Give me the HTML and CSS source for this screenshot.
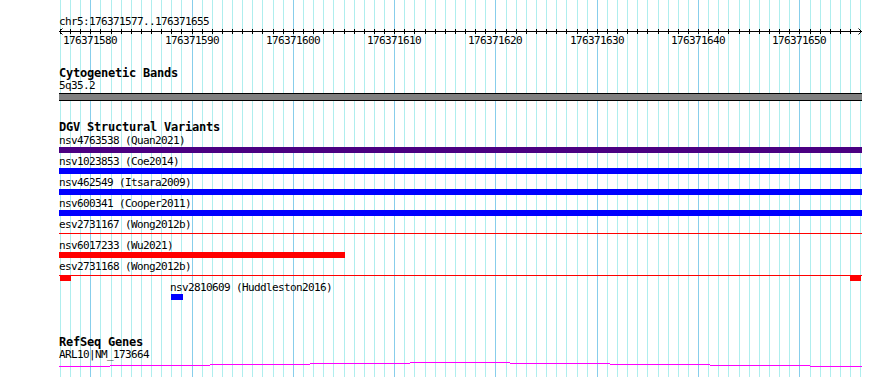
FILE: index.html
```html
<!DOCTYPE html>
<html lang="en">
<head>
<meta charset="utf-8">
<title>chr5:176371577..176371655</title>
<link rel="stylesheet" href="styles.css">
</head>
<body>
<div class="browser">
  <svg class="grid" width="890" height="377" viewBox="0 0 890 377" aria-hidden="true">
    <path class="grid-minor" d="M60.5 0V377M70.5 0V377M80.5 0V377M100.5 0V377M111.5 0V377M121.5 0V377M131.5 0V377M141.5 0V377M151.5 0V377M161.5 0V377M171.5 0V377M181.5 0V377M202.5 0V377M212.5 0V377M222.5 0V377M232.5 0V377M242.5 0V377M252.5 0V377M262.5 0V377M273.5 0V377M283.5 0V377M303.5 0V377M313.5 0V377M323.5 0V377M333.5 0V377M344.5 0V377M354.5 0V377M364.5 0V377M374.5 0V377M384.5 0V377M404.5 0V377M414.5 0V377M425.5 0V377M435.5 0V377M445.5 0V377M455.5 0V377M465.5 0V377M475.5 0V377M485.5 0V377M506.5 0V377M516.5 0V377M526.5 0V377M536.5 0V377M546.5 0V377M556.5 0V377M566.5 0V377M577.5 0V377M587.5 0V377M607.5 0V377M617.5 0V377M627.5 0V377M637.5 0V377M647.5 0V377M658.5 0V377M668.5 0V377M678.5 0V377M688.5 0V377M708.5 0V377M718.5 0V377M728.5 0V377M739.5 0V377M749.5 0V377M759.5 0V377M769.5 0V377M779.5 0V377M789.5 0V377M810.5 0V377M820.5 0V377M830.5 0V377M840.5 0V377M850.5 0V377M860.5 0V377"/>
    <path class="grid-major" d="M90.5 0V377M192.5 0V377M293.5 0V377M394.5 0V377M495.5 0V377M597.5 0V377M698.5 0V377M799.5 0V377"/>
  </svg>

  <section class="ruler">
    <div class="label ruler-title">chr5:176371577..176371655</div>
    <svg class="ruler-axis" width="890" height="7" viewBox="0 0 890 7" aria-hidden="true">
      <path class="axis-line" d="M59 3.5H862"/>
      <path class="axis-ticks" d="M60.5 1V6M70.5 1V6M80.5 1V6M90.5 1V6M100.5 1V6M111.5 1V6M121.5 1V6M131.5 1V6M141.5 1V6M151.5 1V6M161.5 1V6M171.5 1V6M181.5 1V6M192.5 1V6M202.5 1V6M212.5 1V6M222.5 1V6M232.5 1V6M242.5 1V6M252.5 1V6M262.5 1V6M273.5 1V6M283.5 1V6M293.5 1V6M303.5 1V6M313.5 1V6M323.5 1V6M333.5 1V6M344.5 1V6M354.5 1V6M364.5 1V6M374.5 1V6M384.5 1V6M394.5 1V6M404.5 1V6M414.5 1V6M425.5 1V6M435.5 1V6M445.5 1V6M455.5 1V6M465.5 1V6M475.5 1V6M485.5 1V6M495.5 1V6M506.5 1V6M516.5 1V6M526.5 1V6M536.5 1V6M546.5 1V6M556.5 1V6M566.5 1V6M577.5 1V6M587.5 1V6M597.5 1V6M607.5 1V6M617.5 1V6M627.5 1V6M637.5 1V6M647.5 1V6M658.5 1V6M668.5 1V6M678.5 1V6M688.5 1V6M698.5 1V6M708.5 1V6M718.5 1V6M728.5 1V6M739.5 1V6M749.5 1V6M759.5 1V6M769.5 1V6M779.5 1V6M789.5 1V6M799.5 1V6M810.5 1V6M820.5 1V6M830.5 1V6M840.5 1V6M850.5 1V6"/>
      <path class="axis-arrow" d="M62.5 0.5L59.5 3.5L62.5 6.5M858.5 0.5L861.5 3.5L858.5 6.5"/>
    </svg>
    <div class="ruler-labels">
      <span class="label tick-label" style="left:90px">176371580</span>
      <span class="label tick-label" style="left:192px">176371590</span>
      <span class="label tick-label" style="left:293px">176371600</span>
      <span class="label tick-label" style="left:394px">176371610</span>
      <span class="label tick-label" style="left:495px">176371620</span>
      <span class="label tick-label" style="left:597px">176371630</span>
      <span class="label tick-label" style="left:698px">176371640</span>
      <span class="label tick-label" style="left:799px">176371650</span>
    </div>
  </section>

  <section class="track track-cyto">
    <h2 class="track-title track-title-short">Cytogenetic Bands</h2>
    <div class="label">5q35.2</div>
    <div class="band"></div>
  </section>

  <section class="track track-dgv">
    <h2 class="track-title">DGV Structural Variants</h2>

    <div class="sv">
      <div class="label">nsv4763538 (Quan2021)</div>
      <div class="sv-glyph"><div class="bar bar-purple" style="width:803px"></div></div>
    </div>
    <div class="sv">
      <div class="label">nsv1023853 (Coe2014)</div>
      <div class="sv-glyph"><div class="bar bar-blue" style="width:803px"></div></div>
    </div>
    <div class="sv">
      <div class="label">nsv462549 (Itsara2009)</div>
      <div class="sv-glyph"><div class="bar bar-blue" style="width:803px"></div></div>
    </div>
    <div class="sv">
      <div class="label">nsv600341 (Cooper2011)</div>
      <div class="sv-glyph"><div class="bar bar-blue" style="width:803px"></div></div>
    </div>
    <div class="sv">
      <div class="label">esv2731167 (Wong2012b)</div>
      <div class="sv-glyph"><div class="sv-line" style="width:803px"></div></div>
    </div>
    <div class="sv">
      <div class="label">nsv6017233 (Wu2021)</div>
      <div class="sv-glyph"><div class="bar bar-red" style="width:286px"></div></div>
    </div>
    <div class="sv">
      <div class="label">esv2731168 (Wong2012b)</div>
      <div class="sv-glyph">
        <div class="sv-line" style="width:803px"></div>
        <div class="sv-block" style="left:1px"></div>
        <div class="sv-block" style="left:791px"></div>
      </div>
    </div>
    <div class="sv">
      <div class="label" style="margin-left:111px">nsv2810609 (Huddleston2016)</div>
      <div class="sv-glyph"><div class="bar bar-blue" style="width:12px;margin-left:112px"></div></div>
    </div>
  </section>

  <section class="track track-refseq">
    <h2 class="track-title track-title-tight">RefSeq Genes</h2>
    <div class="label">ARL10|NM_173664</div>
    <svg class="gene" width="803" height="6" viewBox="0 0 803 6" aria-hidden="true">
      <path d="M0 5.5H51M51 4.5H151M151 3.5H251M251 2.5H351M351 1.5H451M451 2.5H551M551 3.5H651M651 4.5H751M751 5.5H803"/>
    </svg>
  </section>
</div>
</body>
</html>
```

FILE: styles.css
```css
* {
  box-sizing: border-box;
  margin: 0;
  padding: 0;
}

html,
body {
  background: #ffffff;
}

body {
  width: 890px;
  height: 377px;
  overflow: hidden;
  font-family: "DejaVu Sans Mono", "Liberation Mono", monospace;
  color: #000000;
}

.browser {
  position: relative;
  width: 890px;
  height: 377px;
}

.grid {
  position: absolute;
  top: 0;
  left: 0;
  z-index: 0;
  shape-rendering: crispEdges;
}

.grid-minor {
  stroke: #afeeee;
  stroke-width: 1;
  fill: none;
}

.grid-major {
  stroke: #87ceeb;
  stroke-width: 1;
  fill: none;
}

.ruler,
.track {
  position: relative;
  z-index: 1;
}

.label {
  font-size: 11px;
  line-height: 13px;
  letter-spacing: -0.62px;
  white-space: nowrap;
}

.track-title {
  font-size: 12px;
  font-weight: bold;
  line-height: 13px;
  letter-spacing: -0.22px;
  white-space: nowrap;
}

.track-title-short {
  line-height: 12px;
}

.track-title-tight {
  line-height: 11px;
}

/* ruler */
.ruler-title {
  padding-top: 15px;
  padding-left: 59px;
}

.ruler-axis {
  display: block;
  shape-rendering: crispEdges;
}

.axis-line,
.axis-ticks,
.axis-arrow {
  stroke: #000000;
  stroke-width: 1;
  fill: none;
}

.axis-arrow {
  shape-rendering: auto;
}

.ruler-labels {
  position: relative;
  height: 13px;
  margin-top: -1px;
}

.tick-label {
  position: absolute;
  top: 0;
  transform: translateX(-50%);
}

/* tracks */
.track {
  padding-left: 59px;
}

.track-cyto {
  margin-top: 20px;
}

.band {
  width: 803px;
  height: 8px;
  margin-top: 1px;
  background: #808080;
  border-top: 1px solid #000000;
  border-bottom: 1px solid #000000;
}

.track-dgv {
  margin-top: 20px;
}

.sv {
  height: 21px;
}

.sv-glyph {
  position: relative;
  height: 8px;
}

.bar {
  height: 6px;
}

.bar-purple {
  background: #4b0082;
}

.bar-blue {
  background: #0000ff;
}

.bar-red {
  background: #ff0000;
}

.sv-line {
  height: 1px;
  margin-top: 2px;
  background: #ff0000;
}

.sv-block {
  position: absolute;
  top: 0;
  width: 11px;
  height: 6px;
  background: #ff0000;
}

.track-refseq {
  margin-top: 35px;
}

.gene {
  display: block;
  shape-rendering: crispEdges;
}

.gene path {
  stroke: #ff00ff;
  stroke-width: 1;
  fill: none;
}
```
